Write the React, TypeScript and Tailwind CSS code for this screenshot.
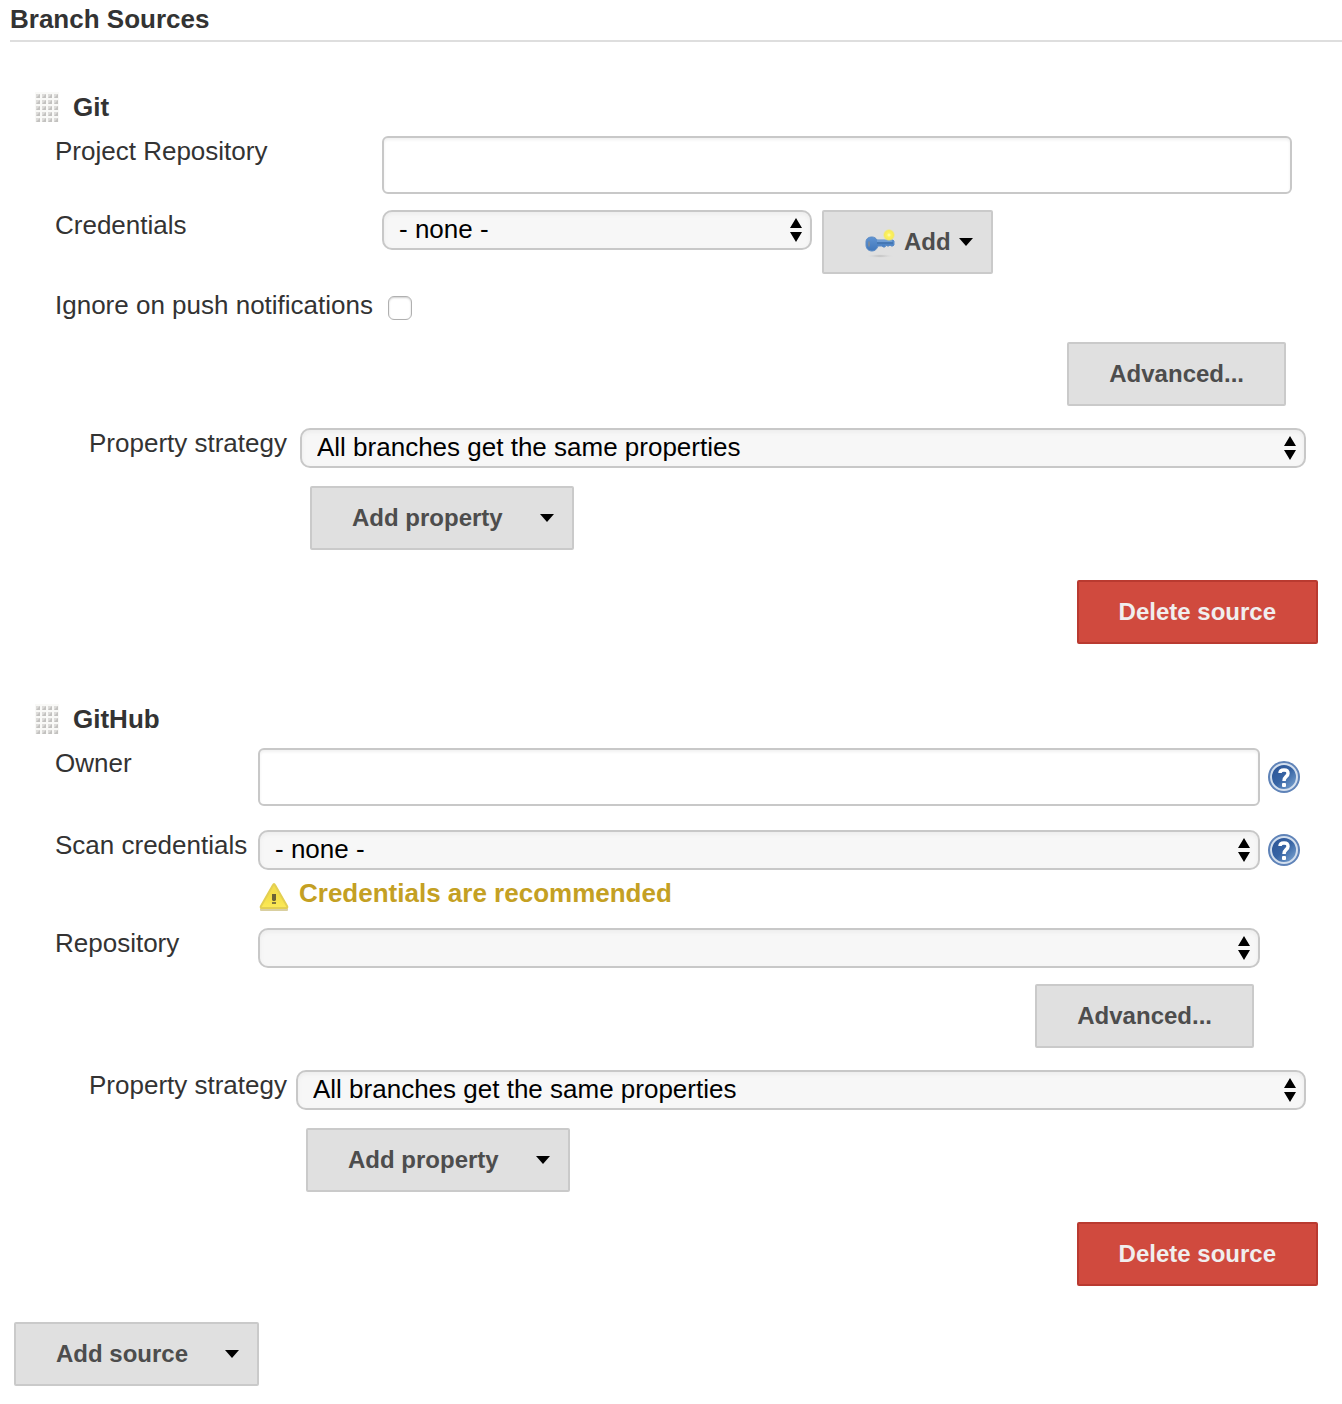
import { useId, type ReactNode } from "react";

function Grip() {
  const cells = Array.from({ length: 20 }, (_, i) => ({ x: (i % 4) * 6, y: Math.floor(i / 4) * 6 }));
  return (
    <svg width="24" height="30" viewBox="0 0 24 30" aria-hidden="true" className="shrink-0 cursor-move">
      <rect width="24" height="30" fill="#f9f9f7" />
      {cells.map(({ x, y }) => (
        <g key={`${x}-${y}`}>
          <rect x={x + 1} y={y + 2} width="4" height="4" fill="#dddcda" />
          <path d={`M${x + 5} ${y + 2}V${y + 6}H${x + 1}Z`} fill="#c3c2c0" />
        </g>
      ))}
    </svg>
  );
}

function Caret() {
  return (
    <svg width="14" height="8" viewBox="0 0 14 8" aria-hidden="true" className="shrink-0">
      <path d="M0 0H14L7 8Z" fill="#000" />
    </svg>
  );
}

function KeyIcon() {
  return (
    <svg width="32" height="32" viewBox="0 0 32 32" aria-hidden="true" className="shrink-0">
      <defs>
        <linearGradient id="key-body" x1="0" y1="0" x2="0" y2="1">
          <stop offset="0" stopColor="#5f93d2" />
          <stop offset="1" stopColor="#4077bb" />
        </linearGradient>
        <radialGradient id="key-spark">
          <stop offset="0" stopColor="#fffcc0" />
          <stop offset="0.35" stopColor="#fdf25c" />
          <stop offset="0.75" stopColor="#f6ea5c" />
          <stop offset="1" stopColor="#f0e878" stopOpacity="0.2" />
        </radialGradient>
        <radialGradient id="key-shadow">
          <stop offset="0" stopColor="#b8b8b8" />
          <stop offset="1" stopColor="#dfdfdf" stopOpacity="0" />
        </radialGradient>
      </defs>
      <ellipse cx="16" cy="30" rx="14" ry="2" fill="url(#key-shadow)" />
      <path
        d="M2 16C2 13 4 11 8 11C10 11 12 12 13 14H29L30 15V19L29 20H27L26 19L25 20H23L22 19L21 21H19L18 20H14C13 23 11 25 8 25C4 25 2 22 2 19Z"
        fill="url(#key-body)"
        stroke="#5c8cc6"
      />
      <path d="M13 17H29" stroke="#39699f" strokeWidth="1" />
      <path d="M13 15H28" stroke="#86aede" strokeWidth="1" />
      <ellipse cx="5" cy="18" rx="1" ry="3" fill="#7d8a99" />
      <circle cx="25" cy="9" r="6" fill="url(#key-spark)" />
    </svg>
  );
}

function WarningIcon() {
  return (
    <svg width="32" height="32" viewBox="0 0 32 32" aria-hidden="true" className="shrink-0">
      <defs>
        <linearGradient id="warn-fill" x1="0" y1="0" x2="0" y2="1">
          <stop offset="0" stopColor="#f3dc50" />
          <stop offset="0.5" stopColor="#f3de48" />
          <stop offset="1" stopColor="#fcea58" />
        </linearGradient>
      </defs>
      <rect x="2" y="28" width="28" height="3" rx="1" fill="#c9ba78" opacity="0.7" />
      <path
        d="M15 5Q16 3 17 5L29 26Q30 28 28 28H4Q2 28 3 26Z"
        fill="url(#warn-fill)"
        stroke="#e3cf52"
        strokeWidth="2"
        strokeLinejoin="round"
      />
      <path d="M14 14H18V20L17 21H15L14 20Z" fill="#6b6236" />
      <rect x="14" y="22" width="4" height="2" fill="#83783f" />
    </svg>
  );
}

function HelpButton({ topic }: { topic: string }) {
  const id = useId();
  return (
    <button type="button" aria-label={`Help for feature: ${topic}`} className="size-8 shrink-0">
      <svg width="32" height="32" viewBox="0 0 32 32" aria-hidden="true">
        <defs>
          <linearGradient id={id} x1="0" y1="0" x2="1" y2="1">
            <stop offset="0" stopColor="#2a5294" />
            <stop offset="0.5" stopColor="#3865a5" />
            <stop offset="1" stopColor="#86aed8" />
          </linearGradient>
        </defs>
        <circle cx="16" cy="16" r="16" fill="#5f83b8" />
        <circle cx="16" cy="16" r="13" fill={`url(#${id})`} stroke="#d3dfee" strokeWidth="2" />
        <path
          d="M12 12C12 10 13 9 16 9C19 9 20 10 20 12.5C20 15.5 16 15.5 16 20"
          fill="none"
          stroke="#fff"
          strokeWidth="3.5"
        />
        <rect x="14" y="22" width="4" height="4" rx="1" fill="#fff" />
      </svg>
    </button>
  );
}

function Button({ children, className = "" }: { children: ReactNode; className?: string }) {
  return (
    <button
      type="button"
      className={`flex h-16 shrink-0 items-center rounded-xs border-2 border-[#cacaca] bg-[#e0e0e0] text-2xl font-bold whitespace-nowrap text-[#4d4d4d] ${className}`}
    >
      {children}
    </button>
  );
}

function MenuButton({ children }: { children: string }) {
  return (
    <Button className="gap-[37px] pr-[18px] pl-10">
      {children}
      <Caret />
    </Button>
  );
}

function DeleteButton() {
  return (
    <button
      type="button"
      className="mt-[30px] mr-6 flex h-16 items-center self-end rounded-xs border-2 border-[#b93a30] bg-[#d04a3e] px-10 text-2xl font-bold text-[#f0eeee]"
    >
      Delete source
    </button>
  );
}

function Select({ id, options, className = "flex-1" }: { id: string; options: string[]; className?: string }) {
  return (
    <div className={`relative h-10 min-w-0 ${className}`}>
      <select
        id={id}
        className="h-10 w-full appearance-none rounded-[10px] border-2 border-[#c8c8c8] bg-[#f7f7f7] pr-8 pb-0.5 pl-[15px] text-[26px] leading-8 text-black shadow-[inset_0_2px_4px_#ececec]"
      >
        {options.map((o) => (
          <option key={o}>{o}</option>
        ))}
      </select>
      <svg
        width="12"
        height="24"
        viewBox="0 0 12 24"
        aria-hidden="true"
        className="pointer-events-none absolute top-2 right-[10px]"
      >
        <path d="M6 0L12 10H0ZM6 24L0 14H12Z" fill="#000" />
      </svg>
    </div>
  );
}

function TextInput({ id }: { id: string }) {
  return (
    <input
      id={id}
      type="text"
      className="h-[58px] min-w-0 flex-1 rounded-md border-2 border-[#c8c8c8] bg-white px-3 text-[26px] shadow-[inset_0_2px_3px_#f1f1f1]"
    />
  );
}

function Label({ htmlFor, className, children }: { htmlFor: string; className: string; children: string }) {
  return (
    <label htmlFor={htmlFor} className={`shrink-0 whitespace-nowrap ${className}`}>
      {children}
    </label>
  );
}

function SourceHeader({ children }: { children: string }) {
  return (
    <div className="mb-3.5 flex items-center gap-3.5 pl-[35px]">
      <Grip />
      <h3 className="font-bold">{children}</h3>
    </div>
  );
}

function PropertyStrategy({ id, labelWidth, indent }: { id: string; labelWidth: string; indent: string }) {
  return (
    <>
      <div className="mt-[22px] flex items-start pr-9 pl-[89px]">
        <Label htmlFor={id} className={labelWidth}>
          Property strategy
        </Label>
        <Select id={id} options={["All branches get the same properties", "Named branches get different properties"]} />
      </div>
      <div className={`mt-[18px] flex ${indent}`}>
        <MenuButton>Add property</MenuButton>
      </div>
    </>
  );
}

export default function App() {
  return (
    <form className="bg-white pb-[18px] font-['Liberation_Sans',Arial,sans-serif] text-[26px] leading-[30px] text-[#333]">
      <h2 className="ml-[10px] border-b-2 border-[#dedede] pt-1 pb-1.5 font-bold">Branch Sources</h2>

      <section className="mt-[50px] flex flex-col">
        <SourceHeader>Git</SourceHeader>
        <div className="flex flex-col gap-4 pr-[50px] pl-[55px]">
          <div className="flex items-start">
            <Label htmlFor="git-repo" className="w-[327px]">Project Repository</Label>
            <TextInput id="git-repo" />
          </div>
          <div className="flex items-start">
            <Label htmlFor="git-credentials" className="w-[327px]">Credentials</Label>
            <Select id="git-credentials" options={["- none -"]} className="w-[430px]" />
            <Button className="ml-[10px] gap-2 pr-[18px] pl-10">
              <KeyIcon />
              <span>Add</span>
              <Caret />
            </Button>
          </div>
          <div className="flex items-start pb-1.5">
            <Label htmlFor="git-ignore" className="w-[333px]">Ignore on push notifications</Label>
            <input
              id="git-ignore"
              type="checkbox"
              className="mt-1.5 size-6 appearance-none rounded-md border border-[#b0b0b0] bg-white shadow-[inset_0_1px_2px_#cfcfcf] checked:bg-[#3b82f6]"
            />
          </div>
          <Button className="mr-1.5 self-end px-10">Advanced...</Button>
        </div>
        <PropertyStrategy id="git-strategy" labelWidth="w-[211px]" indent="pl-[310px]" />
        <DeleteButton />
      </section>

      <section className="mt-[60px] flex flex-col">
        <SourceHeader>GitHub</SourceHeader>
        <div className="flex flex-col pr-[42px] pl-[55px]">
          <div className="flex items-start">
            <Label htmlFor="gh-owner" className="w-[203px]">Owner</Label>
            <div className="flex flex-1 items-center gap-2">
              <TextInput id="gh-owner" />
              <HelpButton topic="Owner" />
            </div>
          </div>
          <div className="mt-6 flex items-start">
            <Label htmlFor="gh-credentials" className="w-[203px]">Scan credentials</Label>
            <div className="flex flex-1 items-center gap-2">
              <Select id="gh-credentials" options={["- none -"]} />
              <HelpButton topic="Scan credentials" />
            </div>
          </div>
          <div className="mt-2 flex items-start gap-[9px] pl-[203px] font-bold text-[#c4a023]">
            <span className="-mb-0.5 pt-0.5">
              <WarningIcon />
            </span>
            <p>Credentials are recommended</p>
          </div>
          <div className="mt-[18px] flex items-start pr-10">
            <Label htmlFor="gh-repo" className="w-[203px]">Repository</Label>
            <Select id="gh-repo" options={[""]} />
          </div>
          <Button className="mt-4 mr-[46px] self-end px-10">Advanced...</Button>
        </div>
        <PropertyStrategy id="gh-strategy" labelWidth="w-[207px]" indent="pl-[306px]" />
        <DeleteButton />
      </section>

      <div className="mt-9 flex pl-3.5">
        <MenuButton>Add source</MenuButton>
      </div>
    </form>
  );
}
